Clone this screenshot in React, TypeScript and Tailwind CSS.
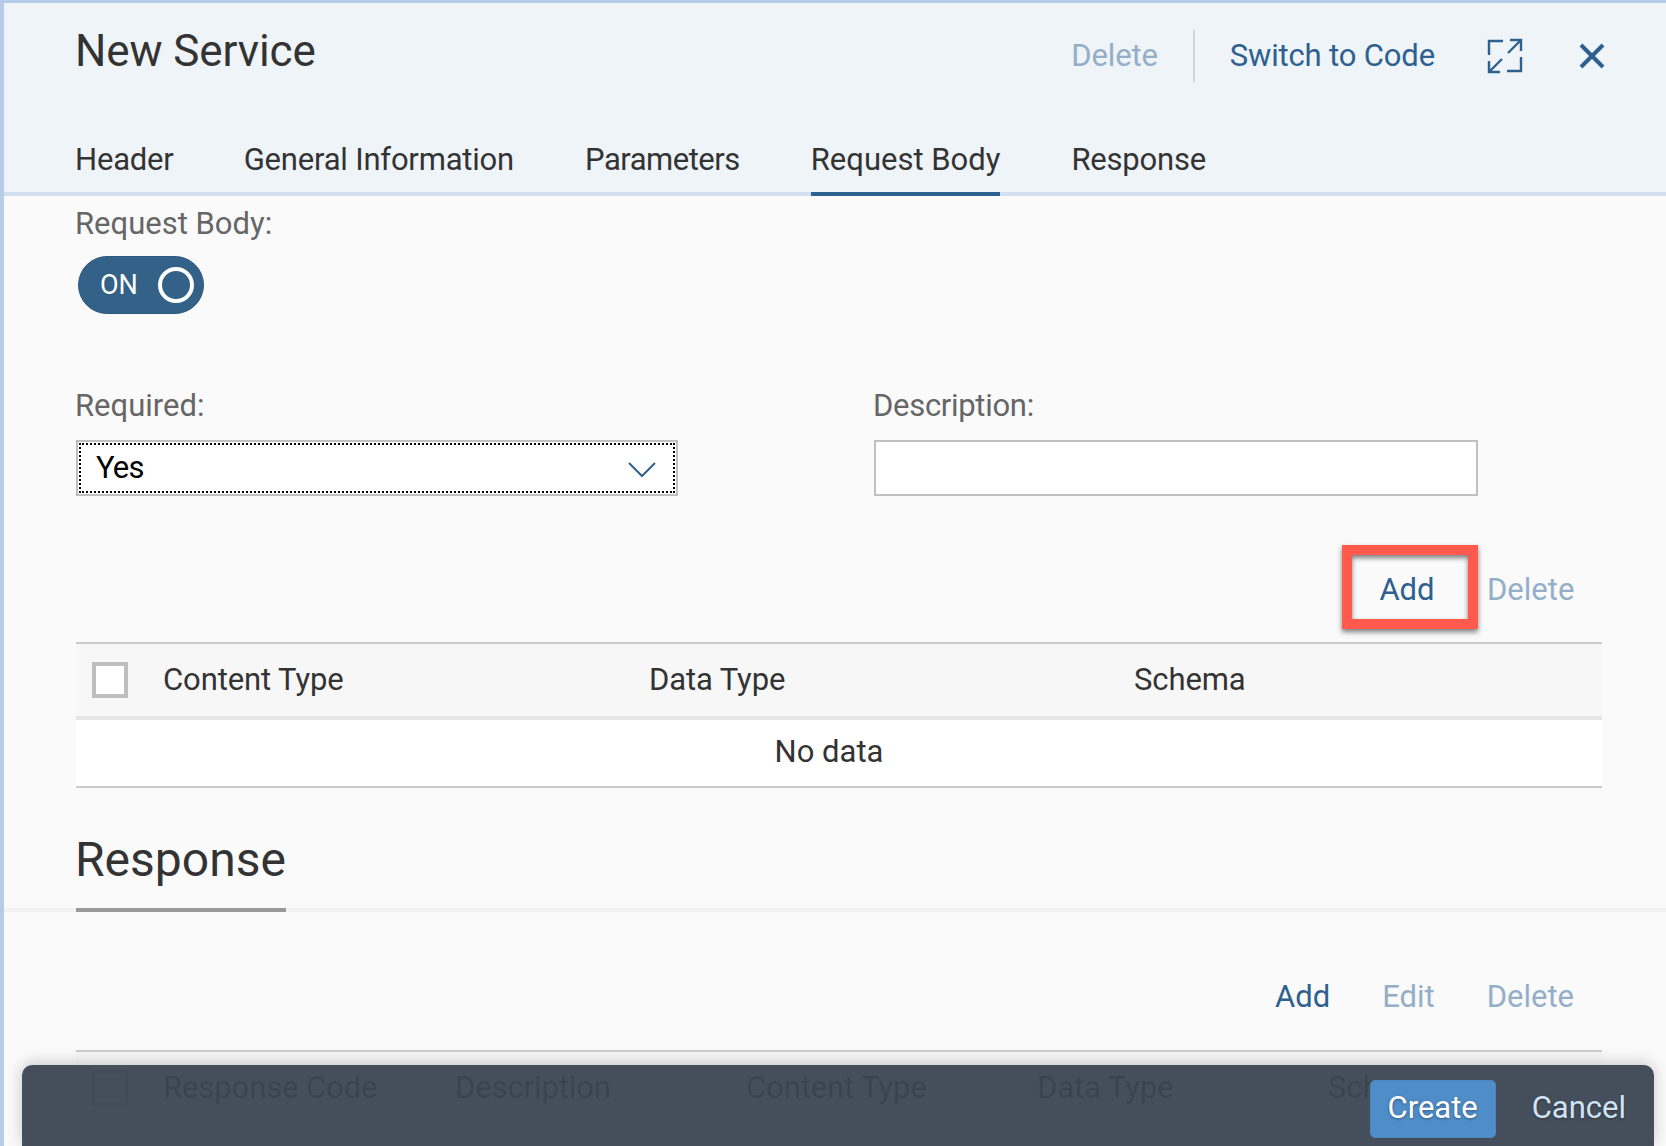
import React from 'react';

const font = { fontFamily: "Roboto, 'Noto Sans', sans-serif" };

function ExpandIcon() {
  return (
    <svg width="36" height="36" viewBox="0 0 36 36" fill="none" stroke="#2e6090" strokeWidth="2.4">
      <path d="M2 17V3h14" />
      <path d="M23 2h11v11M34 2 21 15" />
      <path d="M2 23v11h11M2 34l13-13" />
      <path d="M34 19v14H20" />
    </svg>
  );
}

function CloseIcon() {
  return (
    <svg width="26" height="26" viewBox="0 0 26 26" fill="none" stroke="#2e6090" strokeWidth="4">
      <path d="M2 2l22 22M24 2 2 24" />
    </svg>
  );
}

function Checkbox({ dark }: { dark?: boolean }) {
  return <div className={dark ? 'w-[36px] h-[36px] border-[3px] border-[#bfbfbf] bg-white' : 'w-[36px] h-[36px] border-[4px] border-[#bfbfbf] bg-white'} />;
}

export default function App() {
  return (
    <div className="relative h-screen w-full overflow-hidden bg-[#fafafa] border-l-[4px] border-t-[3px] border-[#b7cde7] text-[#333333]" style={font}>
      {/* header */}
      <div className="bg-[#eff4f9] h-[193px] border-b-[4px] border-[#d1dff0] flex flex-col justify-between">
        <div className="flex items-start justify-between pl-[71px] pr-[61px]">
          <h1 className="text-[44px] leading-[50px] mt-[23px] tracking-[-0.1px]">New Service</h1>
          <div className="flex items-center mt-[26px] text-[31px] leading-[52px] text-[#2e6090] tracking-[-0.15px]">
            <span className="text-[#94aec8] pt-[1px] -mr-[1px]">Delete</span>
            <div className="w-[2px] h-[52px] bg-[#c9d5e2] ml-[36px] mr-[35px]" />
            <span className="pt-[1px]">Switch to Code</span>
            <div className="ml-[52px] mr-[56px] flex"><ExpandIcon /></div>
            <CloseIcon />
          </div>
        </div>
        <div className="flex pl-[71px] gap-[70px] text-[31px] leading-[40px] -mb-[4px] tracking-[-0.2px]">
          <div className="pb-[16px]">Header</div>
          <div className="pb-[16px]">General Information</div>
          <div className="pb-[16px] ml-[1px] mr-[1px] tracking-[-0.5px]">Parameters</div>
          <div className="pb-[12px] mr-[1px] border-b-[4px] border-[#2e6090] tracking-normal">Request Body</div>
          <div className="pb-[16px]">Response</div>
        </div>
      </div>

      {/* request body */}
      <div className="pl-[72px] pr-[64px]">
        <div className="text-[31px] leading-[40px] text-[#666666] mt-[8px] -ml-[1px]">Request Body:</div>
        <div className="mt-[12px] w-[126px] h-[58px] rounded-[29px] bg-[#346187] border border-[#2e5a80] ml-[2px] flex items-center justify-between pl-[21px] pr-[9px] text-white text-[27px]">
          <span className="pt-[1px]">ON</span>
          <div className="w-[36px] h-[36px] rounded-full border-[4px] border-white" />
        </div>

        <div className="flex mt-[72px]">
          <div className="w-[602px] mr-[196px]">
            <div className="text-[31px] leading-[40px] text-[#666666] -ml-[1px]">Required:</div>
            <div className="mt-[14px] h-[56px] border-[2px] border-[#bfbfbf] bg-white p-[1px]">
              <div className="h-full border-[2px] border-dotted border-black flex items-center justify-between pl-[15px] pr-[17px] text-[31px] text-black">
                <span className="pt-[1px] tracking-[-0.8px]">Yes</span>
                <svg width="28" height="16" viewBox="0 0 28 16" fill="none" stroke="#2e6090" strokeWidth="2" className="mt-[3px]">
                  <path d="M1 1l13 13L27 1" />
                </svg>
              </div>
            </div>
          </div>
          <div className="w-[604px]">
            <div className="text-[31px] leading-[40px] text-[#666666] -ml-[1px] tracking-[-0.3px]">Description:</div>
            <div className="mt-[14px] h-[56px] border-[2px] border-[#bfbfbf] bg-white" />
          </div>
        </div>

        {/* toolbar with highlighted Add */}
        <div className="flex items-center mt-[49px] pl-[1266px] text-[31px]">
          <div className="w-[136px] h-[84px] border-[10px] border-[#ff5a4d] flex items-center justify-center pt-[6px] pr-[6px] text-[#2e6090] shadow-[0_3px_5px_rgba(0,0,0,0.5),inset_0_3px_5px_rgba(0,0,0,0.5)]">Add</div>
          <span className="ml-[9px] mt-[6px] text-[#94aec8]">Delete</span>
        </div>

        {/* content table */}
        <div className="mt-[13px] border-t-[2px] border-[#cccccc]">
          <div className="h-[76px] bg-[#f7f7f7] border-b-[4px] border-[#e5e5e5] flex items-center text-[31px] pl-[16px] tracking-[-0.1px]">
            <Checkbox />
            <div className="w-[486px] ml-[35px]">Content Type</div>
            <div className="w-[485px]">Data Type</div>
            <div>Schema</div>
          </div>
          <div className="h-[68px] bg-white border-b-[2px] border-[#cccccc] flex items-center justify-center text-[31px] pr-[20px] pb-[2px]">No data</div>
        </div>

        {/* response section */}
        <h2 className="text-[48px] leading-[56px] mt-[44px] -ml-[1px]">Response</h2>
      </div>
      <div className="h-[4px] bg-[#f2f2f2] mt-[20px] pl-[72px]">
        <div className="w-[210px] h-[4px] bg-[#999999]" />
      </div>
      <div className="pl-[72px] pr-[64px]">
        <div className="flex justify-end gap-[52px] pr-[28px] mt-[65px] text-[31px] leading-[40px] text-[#94aec8]">
          <span className="text-[#2e6090]">Add</span>
          <span>Edit</span>
          <span>Delete</span>
        </div>
        <div className="mt-[33px] border-t-[2px] border-[#cccccc]">
          <div className="h-[72px] bg-[#f7f7f7] flex items-center text-[31px] pl-[16px] tracking-[-0.1px]">
            <Checkbox dark />
            <div className="w-[292px] ml-[35px]">Response Code</div>
            <div className="w-[291px]">Description</div>
            <div className="w-[291px]">Content Type</div>
            <div className="w-[291px]">Data Type</div>
            <div>Schema</div>
          </div>
        </div>
      </div>

      {/* floating footer */}
      <div className="absolute left-[18px] right-[12px] bottom-0 h-[81px] rounded-t-[10px] bg-[#3b4652]/95 shadow-[0_-2px_16px_rgba(0,0,0,0.2)] flex items-center justify-end pr-[28px] text-[31px] [text-shadow:0_1px_3px_rgba(0,0,0,0.35)]">
        <div className="h-[58px] w-[126px] mt-[6px] mr-[1px] rounded-[5px] bg-[#4f8dc8] border border-[#4a86bf] text-white flex items-center justify-center">Create</div>
        <span className="ml-[35px] mt-[6px] text-[#cfe3f5]">Cancel</span>
      </div>
    </div>
  );
}
